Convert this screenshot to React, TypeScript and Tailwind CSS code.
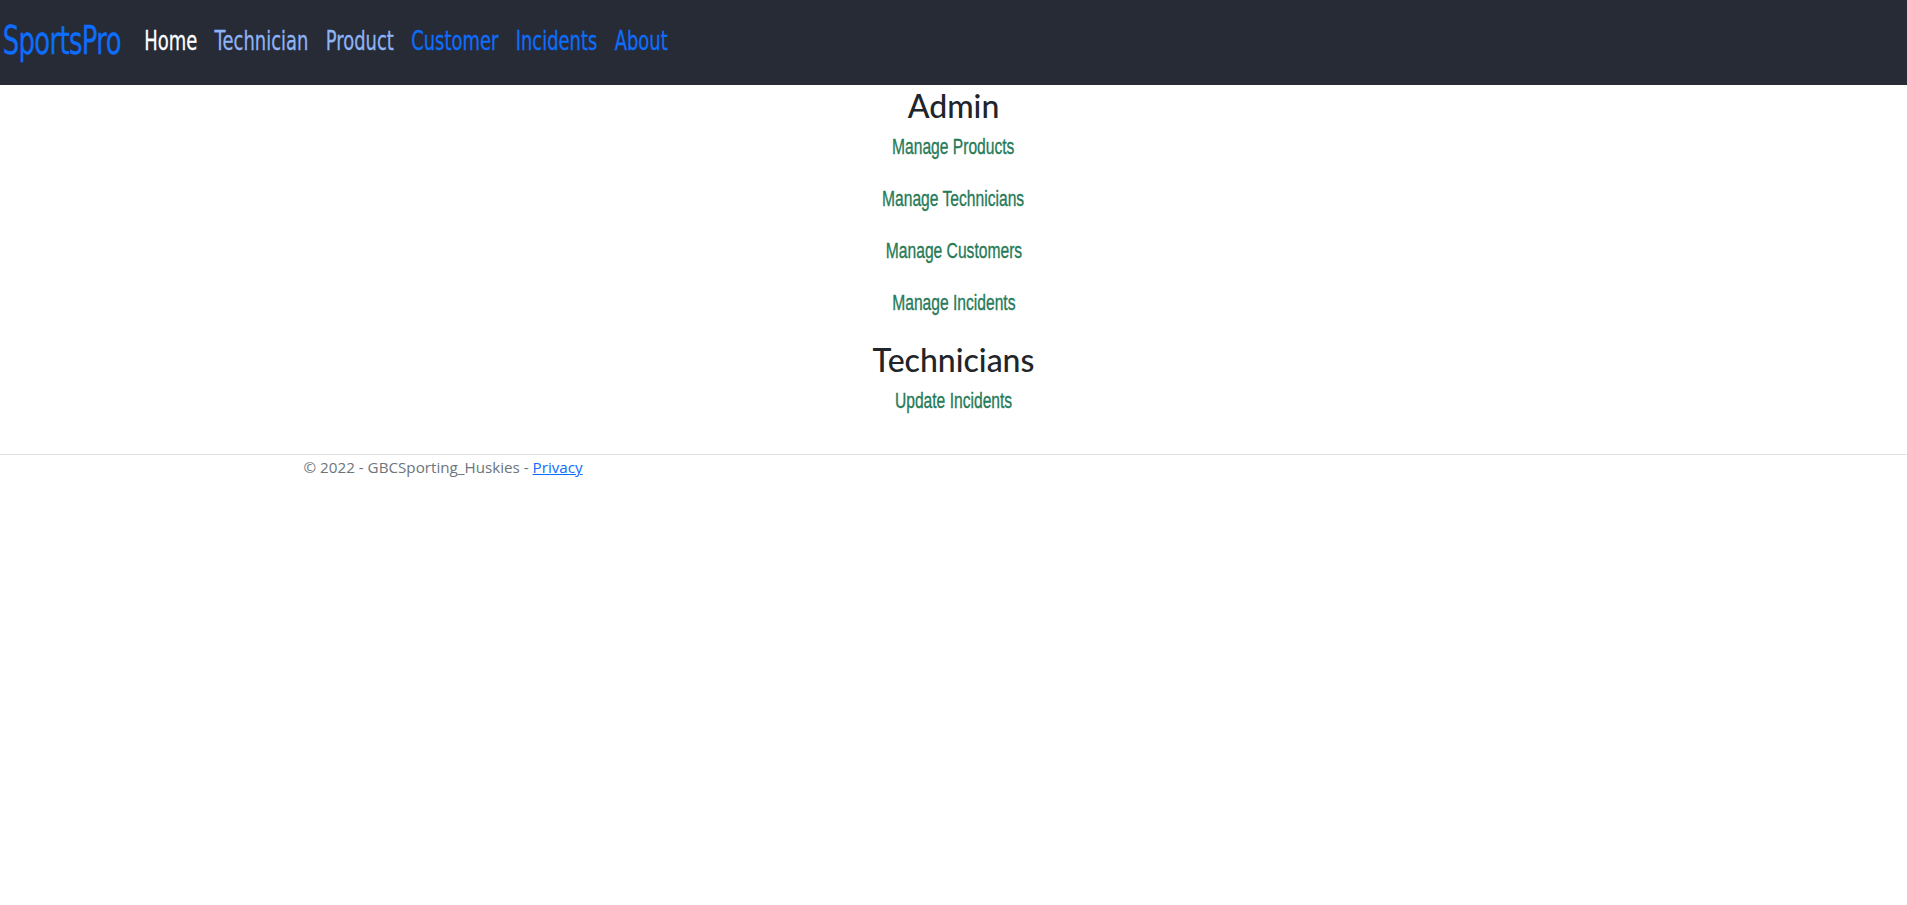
const navLinks = [
  { label: 'Home', color: 'text-white' },
  { label: 'Technician', color: 'text-[#8db4f5]' },
  { label: 'Product', color: 'text-[#8db4f5]' },
  { label: 'Customer', color: 'text-[#0d6efd]' },
  { label: 'Incidents', color: 'text-[#0d6efd]' },
  { label: 'About', color: 'text-[#0d6efd]' },
];

const adminLinks = ['Manage Products', 'Manage Technicians', 'Manage Customers', 'Manage Incidents'];

// no condensed face installed, so the narrow look comes from a horizontal squeeze
const linkCls =
  "inline-block scale-x-[0.71] text-[22px] leading-[26px] text-[#277a57] [-webkit-text-stroke-width:0.35px] font-['Liberation_Sans',sans-serif]";

export default function App() {
  return (
    <div className="min-h-screen bg-white">
      <nav className="h-[85px] bg-[#272b36] flex items-center pb-[2px] font-['DejaVu_Sans',sans-serif] [-webkit-text-stroke-width:0.3px]">
        <div className="flex items-center scale-x-[0.665] origin-left">
          <a href="#" className="pl-[4px] text-[39px] text-[#0d6efd] tracking-[-1px]">SportsPro</a>
          <ul className="flex items-center gap-[26px] ml-[35px]">
            {navLinks.map((link) => (
              <li key={link.label}>
                <a href="#" className={`text-[27px] ${link.color}`}>{link.label}</a>
              </li>
            ))}
          </ul>
        </div>
      </nav>

      <main className="flex flex-col items-center text-center">
        <h2 className="mt-[2px] text-[32px] leading-[38px] text-[#212529] font-['Lato',sans-serif] font-medium">Admin</h2>
        <div className="mt-[9px] flex flex-col items-center gap-[26px]">
          {adminLinks.map((label) => (
            <a key={label} href="#" className={linkCls}>
              {label}
            </a>
          ))}
        </div>
        <h2 className="mt-[25px] text-[32px] leading-[38px] text-[#212529] font-['Lato',sans-serif] font-medium">Technicians</h2>
        <a href="#" className={`mt-[9px] ${linkCls}`}>
          Update Incidents
        </a>
      </main>

      <footer className="mt-[40px] border-t border-[#dee2e6]">
        <div className="mx-auto max-w-[1320px] px-[10px] leading-[24px] text-[15.2px] text-[#6c757d] font-['Open_Sans',sans-serif]">
          © 2022 - GBCSporting_Huskies - <a href="#" className="text-[#0d6efd] underline">Privacy</a>
        </div>
      </footer>
    </div>
  );
}
